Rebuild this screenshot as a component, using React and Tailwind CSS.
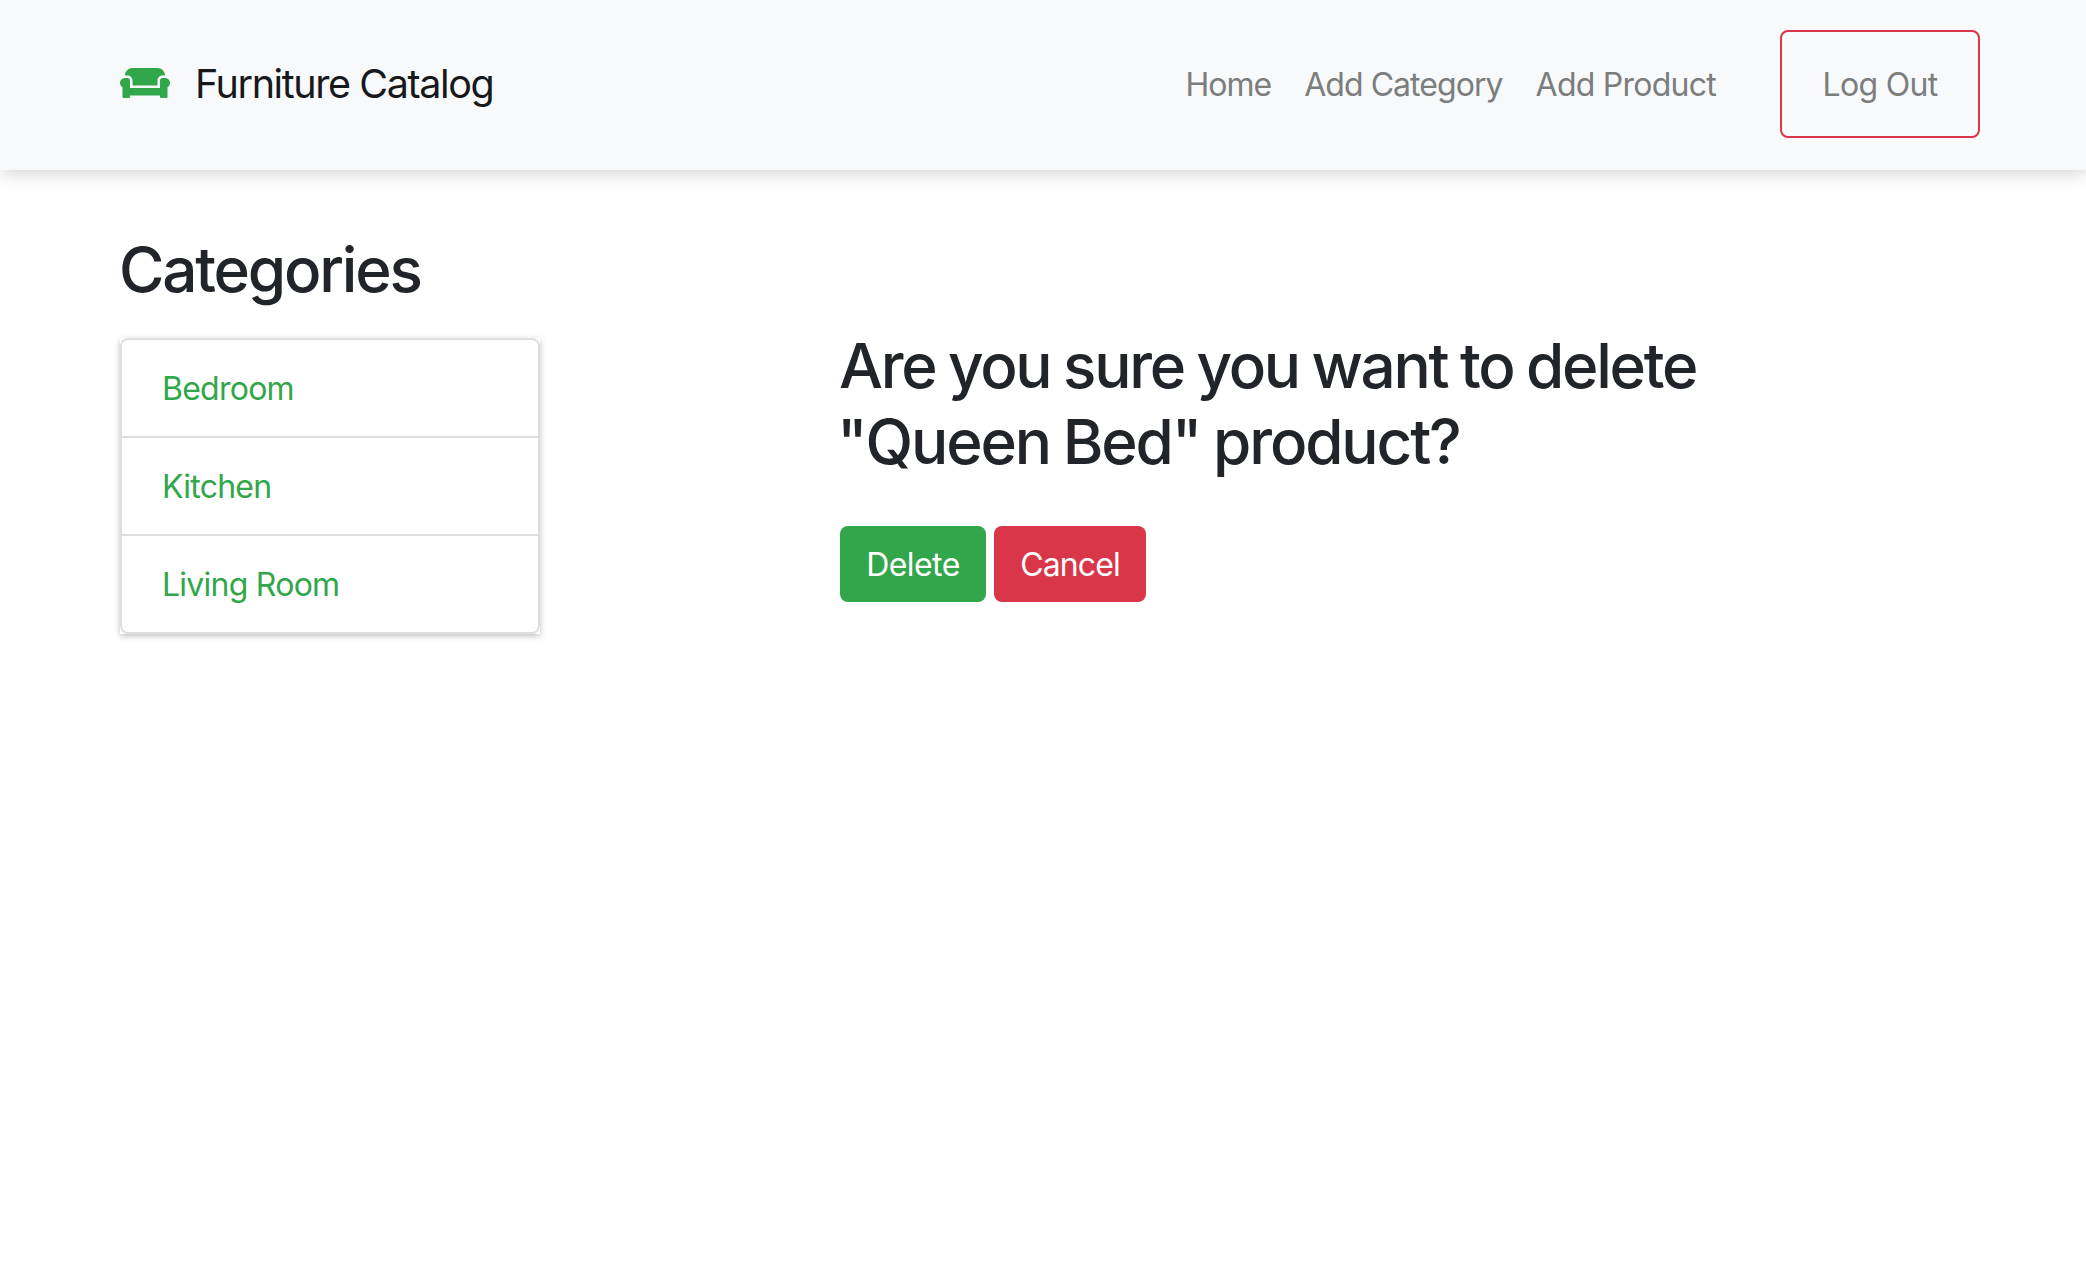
import React from "react";
import { FaCouch } from "react-icons/fa";

const navLinks = [
  { label: "Home", cls: "tracking-[-1px]" },
  { label: "Add Category", cls: "tracking-[-0.95px]" },
  { label: "Add Product", cls: "tracking-[-0.75px]" },
];

const categories = ["Bedroom", "Kitchen", "Living Room"];

function Header() {
  return (
    <header className="flex h-[170px] items-start justify-between bg-[#f8f9fb] pt-[30px] pr-[106px] pl-[120px] shadow-[0_4px_16px_rgba(0,0,0,0.16)]">
      <a href="#" className="flex h-[108px] items-center text-[39.5px] leading-[60px] tracking-[-1.4px] text-[#17181a]">
        <FaCouch className="mr-[25px] mb-[2px] h-10 w-[50px] text-[#32a64a]" />
        Furniture Catalog
      </a>
      <nav className="flex h-[108px] items-center text-[32px] leading-[48px] text-[#7c7d7d]">
        <ul className="mr-[64px] flex gap-[33px] pt-[2px]">
          {navLinks.map((l) => (
            <li key={l.label}>
              <a href="#" className={l.cls}>{l.label}</a>
            </li>
          ))}
        </ul>
        <a href="#" className="flex h-[108px] w-[200px] items-center justify-center rounded-lg border-2 border-[#dc354a] pt-[2px] tracking-[-0.7px]">
          Log Out
        </a>
      </nav>
    </header>
  );
}

export default function App() {
  return (
    <div className="min-h-screen bg-white font-['Inter',sans-serif] text-[#212529]">
      <Header />
      <main className="flex pt-[62px] pl-[120px]">
        <aside className="w-[420px]">
          <h2 className="-ml-px text-[62px] leading-[76px] font-medium tracking-[-2.2px]">Categories</h2>
          <div className="mt-[30px] bg-white shadow-[0_2px_6px_rgba(0,0,0,0.25)]">
            <ul className="divide-y-2 divide-[#dfdfdf] rounded-lg border-2 border-[#dfdfdf]">
              {categories.map((c) => (
                <li key={c} className="flex h-[98px] items-center px-10 pt-[2px] last:h-24">
                  <a href="#" className="text-[32px] leading-[48px] tracking-[-0.75px] text-[#32a64a]">{c}</a>
                </li>
              ))}
            </ul>
          </div>
        </aside>
        <section className="ml-[300px] pt-24">
          <h2 className="-ml-px text-[62px] leading-[76px] font-medium tracking-[-2.3px] [word-spacing:-1.5px]">
            Are you sure you want to delete
            <br />
            <span className="-ml-[2px] tracking-[-2.15px]">"Queen Bed" product?</span>
          </h2>
          <div className="mt-[46px] flex gap-2 text-[32px] leading-[48px] text-white">
            <button className="h-[76px] w-[146px] rounded-lg bg-[#32a64a] pt-[2px] tracking-[-0.6px]">Delete</button>
            <button className="h-[76px] w-[152px] rounded-lg bg-[#da3649] pt-[2px] tracking-[-0.9px]">Cancel</button>
          </div>
        </section>
      </main>
    </div>
  );
}
